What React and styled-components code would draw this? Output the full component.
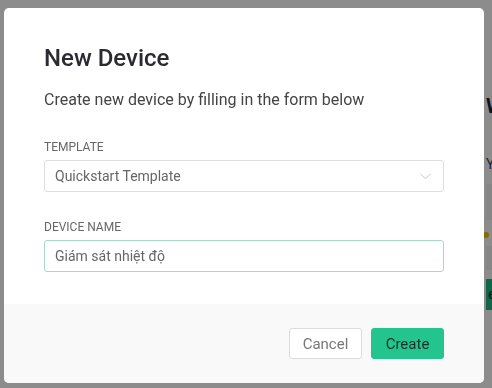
import React from "react";
import styled, { createGlobalStyle } from "styled-components";

const GlobalStyle = createGlobalStyle`
  html, body {
    margin: 0;
    padding: 0;
    width: 492px;
    height: 388px;
    overflow: hidden;
    font-family: Roboto, "Noto Sans", sans-serif;
    background: #fff;
  }
`;

const Page = styled.div`
  width: 492px;
  height: 388px;
  display: flex;
  flex-direction: column;
  padding: 94px 0 0 486px;
  box-sizing: border-box;
  background: #fff;
  overflow: hidden;
`;

const PageTitle = styled.div`
  font-size: 20px;
  font-weight: 700;
  color: #1d2540;
  white-space: nowrap;
`;

const PageText = styled.div`
  margin-top: 38px;
  font-size: 14px;
  color: #4a3a6a;
  white-space: nowrap;
`;

const Band = styled.div`
  margin-top: 12px;
  height: 36px;
  background: #f4f4f4;
`;

const Dot = styled.div`
  margin-top: 12px;
  width: 6px;
  height: 6px;
  border-radius: 50%;
  background: #f2c500;
  margin-left: -3px;
`;

const Band2 = styled.div`
  margin-top: 8px;
  height: 24px;
  background: #f4f4f4;
`;

const GreenBtn = styled.div`
  margin-top: 9px;
  height: 31px;
  width: 80px;
  background: #23b985;
  color: #0d2a20;
  font-size: 15px;
  line-height: 31px;
  padding-left: 2px;
`;

const Overlay = styled.div`
  position: fixed;
  inset: 0;
  background: rgba(0, 0, 0, 0.45);
  display: flex;
  align-items: flex-start;
  padding: 8px 0 0 4px;
  box-sizing: border-box;
`;

const Modal = styled.div`
  width: 480px;
  height: 375px;
  background: #fff;
  border-radius: 5px;
  overflow: hidden;
  display: flex;
  flex-direction: column;
`;

const Body = styled.div`
  padding: 34px 40px 0 40px;
  height: 296px;
  box-sizing: border-box;
`;

const Title = styled.h2`
  margin: 0;
  font-size: 24px;
  font-weight: 500;
  color: #2a2a30;
  line-height: 32px;
`;

const Subtitle = styled.p`
  margin: 16px 0 0;
  font-size: 16px;
  color: #444;
  line-height: 20px;
`;

const Field = styled.div`
  margin-top: ${(p) => p.$top}px;
`;

const Label = styled.div`
  font-size: 12px;
  color: #666;
  text-transform: uppercase;
  line-height: 14px;
  margin-bottom: 6px;
`;

const Box = styled.div`
  height: 32px;
  box-sizing: border-box;
  border: 1px solid ${(p) => (p.$focus ? "#a6dcc6" : "#dedede")};
  border-radius: 3px;
  display: flex;
  align-items: center;
  justify-content: space-between;
  padding: 0 12px 0 10px;
  font-size: 14px;
  color: #666;
`;

const Footer = styled.div`
  flex: 1;
  background: #f9f9f9;
  display: flex;
  justify-content: flex-end;
  align-items: flex-start;
  gap: 9px;
  padding: 24px 40px 0 0;
`;

const Button = styled.button`
  width: 73px;
  height: 31px;
  border-radius: 3px;
  font-family: Roboto, sans-serif;
  font-size: 15px;
  cursor: pointer;
  border: 1px solid ${(p) => (p.$primary ? "#23c48e" : "#dcdcdc")};
  background: ${(p) => (p.$primary ? "#23c48e" : "#fff")};
  color: ${(p) => (p.$primary ? "#17302a" : "#777")};
`;

const Chevron = () => (
  <svg width="11" height="7" viewBox="0 0 11 7">
    <path d="M0.5 0.8 L5.5 5.8 L10.5 0.8" fill="none" stroke="#c4c4c4" strokeWidth="1" />
  </svg>
);

export default function App() {
  return (
    <>
      <GlobalStyle />
      <Page>
        <PageTitle>Welcome</PageTitle>
        <PageText>Your devices</PageText>
        <Band />
        <Dot />
        <Band2 />
        <GreenBtn>e</GreenBtn>
      </Page>
      <Overlay>
        <Modal>
          <Body>
            <Title>New Device</Title>
            <Subtitle>Create new device by filling in the form below</Subtitle>
            <Field $top={30}>
              <Label>Template</Label>
              <Box>
                Quickstart Template
                <Chevron />
              </Box>
            </Field>
            <Field $top={28}>
              <Label>Device Name</Label>
              <Box $focus>Giám sát nhiệt độ</Box>
            </Field>
          </Body>
          <Footer>
            <Button>Cancel</Button>
            <Button $primary>Create</Button>
          </Footer>
        </Modal>
      </Overlay>
    </>
  );
}
